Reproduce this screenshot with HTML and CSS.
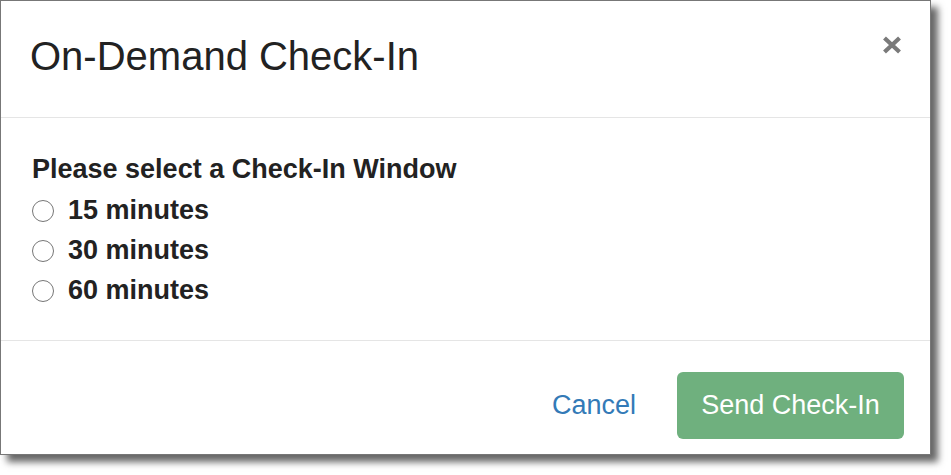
FILE: index.html
```html
<!DOCTYPE html>
<html>
<head>
<meta charset="utf-8">
<link rel="stylesheet" href="styles.css">
</head>
<body>
<div class="dialog">
  <div class="header">
    <h1 class="title">On-Demand Check-In</h1>
    <button class="close" aria-label="Close">
      <svg width="20" height="18" viewBox="0 0 20 18"><path d="M2.5 2 L17.5 16 M17.5 2 L2.5 16" stroke="#7a7a7a" stroke-width="4.2" stroke-linecap="butt"/></svg>
    </button>
  </div>
  <div class="body">
    <div class="label">Please select a Check-In Window</div>
    <label class="option"><input type="radio" name="win" class="radio"><span>15 minutes</span></label>
    <label class="option"><input type="radio" name="win" class="radio"><span>30 minutes</span></label>
    <label class="option"><input type="radio" name="win" class="radio"><span>60 minutes</span></label>
  </div>
  <div class="footer">
    <a class="cancel" href="#">Cancel</a>
    <button class="send">Send Check-In</button>
  </div>
</div>
</body>
</html>
```
FILE: styles.css
```css
html, body {
  margin: 0;
  padding: 0;
  background: #ffffff;
}
body {
  min-height: 475px;
  font-family: "Liberation Sans", Arial, sans-serif;
  color: #222222;
}
.dialog {
  width: 929px;
  height: 453px;
  border: 1px solid #777777;
  background: #ffffff;
  box-shadow: 7px 7px 7px rgba(0, 0, 0, 0.6);
  display: flex;
  flex-direction: column;
}
.header {
  height: 117px;
  flex: none;
  border-bottom: 1px solid #e5e5e5;
  display: flex;
  align-items: flex-start;
  justify-content: space-between;
  padding: 0 28px 0 29px;
  box-sizing: border-box;
}
.title {
  margin: 33px 0 0 0;
  font-size: 40px;
  font-weight: normal;
  line-height: 44px;
  color: #222222;
}
.close {
  margin-top: 35px;
  padding: 0;
  border: 0;
  background: none;
  width: 20px;
  height: 18px;
  display: flex;
}
.body {
  padding: 31px 30px 0 31px;
  height: 223px;
  flex: none;
  box-sizing: border-box;
  border-bottom: 1px solid #e5e5e5;
  display: flex;
  flex-direction: column;
}
.label {
  font-size: 27px;
  font-weight: bold;
  line-height: 40px;
  margin-bottom: 1px;
}
.option {
  display: flex;
  align-items: center;
  font-size: 27px;
  font-weight: bold;
  line-height: 40px;
  gap: 14px;
}
.radio {
  appearance: none;
  -webkit-appearance: none;
  margin: 2px 0 0 0;
  width: 22px;
  height: 22px;
  border: 1.5px solid #767676;
  border-radius: 50%;
  background: #fff;
  box-sizing: border-box;
}
.footer {
  flex: 1;
  display: flex;
  justify-content: flex-end;
  align-items: flex-start;
  padding: 31px 26px 0 0;
  box-sizing: border-box;
}
.cancel {
  font-size: 27px;
  color: #337ab7;
  text-decoration: none;
  line-height: 67px;
  margin-right: 41px;
}
.send {
  width: 227px;
  height: 67px;
  border: 0;
  border-radius: 6px;
  background: #6fb07e;
  color: #ffffff;
  font-family: "Liberation Sans", Arial, sans-serif;
  font-size: 27px;
  padding: 0;
}
```
